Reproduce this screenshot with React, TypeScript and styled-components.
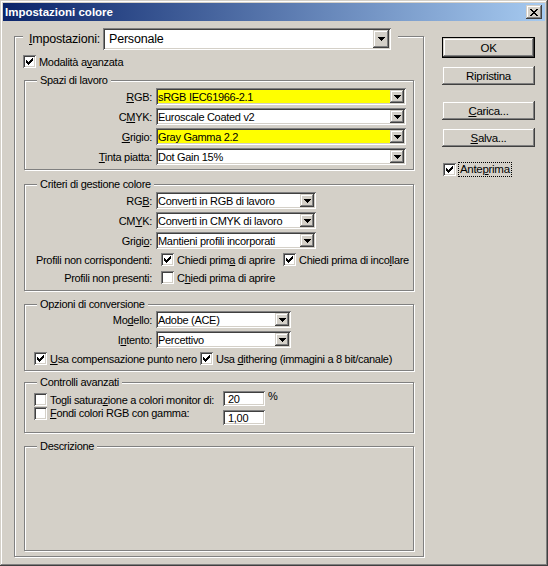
import * as React from 'react';
import styled, { createGlobalStyle } from 'styled-components';

const GlobalStyle = createGlobalStyle`
  html, body {
    margin: 0;
    padding: 0;
    background: #d4d0c8;
  }
  body {
    font-family: "Liberation Sans", Arial, sans-serif;
    font-size: 11px;
    letter-spacing: -0.3px;
    color: #000;
  }
`;

const raised = `
  box-shadow: inset -1px -1px 0 #404040, inset 1px 1px 0 #d4d0c8,
    inset -2px -2px 0 #808080, inset 2px 2px 0 #fff;
`;
const sunken = `
  box-shadow: inset 1px 1px 0 #808080, inset -1px -1px 0 #fff,
    inset 2px 2px 0 #404040, inset -2px -2px 0 #d4d0c8;
`;

const Frame = styled.div`
  width: 548px;
  height: 566px;
  box-sizing: border-box;
  padding: 3px;
  background: #d4d0c8;
  ${raised}
  display: flex;
  flex-direction: column;
`;

const TitleBar = styled.div`
  height: 18px;
  flex: none;
  display: flex;
  align-items: center;
  justify-content: space-between;
  padding: 0 3px 0 2px;
  background: linear-gradient(to right, #0a246a, #a6caf0);
  color: #fff;
  font-weight: bold;
  font-size: 11.5px;
  letter-spacing: 0;
`;

const CloseBtn = styled.span`
  width: 16px;
  height: 14px;
  display: flex;
  align-items: center;
  justify-content: center;
  background: #d4d0c8;
  ${raised}
`;

const Body = styled.div`
  display: flex;
  gap: 18px;
  padding: 15px 0 0 11px;
`;

const OuterGroup = styled.div`
  width: 410px;
  height: 521px;
  box-sizing: border-box;
  border: 1px solid #808080;
  box-shadow: inset 1px 1px 0 #fff, 1px 1px 0 #fff;
  display: flex;
  flex-direction: column;
  padding: 0 9px;
`;

const HeaderCaption = styled.div`
  display: flex;
  align-items: center;
  align-self: flex-start;
  margin: -9px 0 0 -1px;
  padding: 0 7px 0 6px;
  background: #d4d0c8;
  font-size: 12.5px;
  letter-spacing: -0.2px;
`;

const HeaderLabel = styled.span`
  width: 74px;
  white-space: nowrap;
`;

const Group = styled.div<{ $h: number; $mt: number }>`
  width: 390px;
  height: ${p => p.$h}px;
  margin-top: ${p => p.$mt}px;
  box-sizing: border-box;
  flex: none;
  border: 1px solid #808080;
  box-shadow: inset 1px 1px 0 #fff, 1px 1px 0 #fff;
  display: flex;
  flex-direction: column;
`;

const Caption = styled.span`
  align-self: flex-start;
  height: 13px;
  line-height: 13px;
  margin: -7px 0 0 12px;
  padding: 0 3px;
  background: #d4d0c8;
`;

const Rows = styled.div<{ $pt: number; $gap?: number }>`
  display: flex;
  flex-direction: column;
  gap: ${p => (p.$gap === undefined ? 3 : p.$gap)}px;
  padding-top: ${p => p.$pt}px;
`;

const FieldRow = styled.div`
  display: grid;
  grid-template-columns: 127px auto;
  column-gap: 4px;
  align-items: center;
  height: 17px;
`;

const RowLabel = styled.span`
  text-align: right;
  white-space: nowrap;
`;

const Field = styled.div<{ $w: number; $h: number; $bg?: string }>`
  width: ${p => p.$w}px;
  height: ${p => p.$h}px;
  box-sizing: border-box;
  padding: 2px;
  display: flex;
  background: ${p => p.$bg || '#fff'};
  ${sunken}
`;

const FieldText = styled.span<{ $pl: number }>`
  flex: 1;
  display: flex;
  align-items: center;
  padding-left: ${p => p.$pl}px;
  white-space: nowrap;
  overflow: hidden;
`;

const DropBtn = styled.span<{ $w: number }>`
  width: ${p => p.$w}px;
  flex: none;
  display: flex;
  align-items: center;
  justify-content: center;
  background: #d4d0c8;
  ${raised}
`;

const CheckRow = styled.div<{ $cols: string; $pl?: number; $ml?: number; $mt?: number }>`
  display: grid;
  grid-template-columns: ${p => p.$cols};
  align-items: center;
  height: 15px;
  padding-left: ${p => p.$pl || 0}px;
  margin-left: ${p => p.$ml || 0}px;
  margin-top: ${p => p.$mt || 0}px;
`;

const CheckItem = styled.span`
  display: flex;
  align-items: center;
  gap: 3px;
  white-space: nowrap;
`;

const Box = styled.span`
  width: 13px;
  height: 13px;
  box-sizing: border-box;
  padding: 2px;
  flex: none;
  display: flex;
  align-items: center;
  justify-content: center;
  background: #fff;
  ${sunken}
`;

const AdvRow = styled.div<{ $h: number }>`
  display: grid;
  grid-template-columns: 16px 173px 42px auto;
  height: ${p => p.$h}px;
  padding-left: 9px;
  white-space: nowrap;
`;

const Cell = styled.span<{ $mt?: number }>`
  margin-top: ${p => p.$mt || 0}px;
  display: flex;
  align-items: flex-start;
`;

const NumInput = styled.span<{ $mt?: number }>`
  width: 42px;
  height: 15px;
  margin-top: ${p => p.$mt || 0}px;
  box-sizing: border-box;
  padding: 2px 0 0 5px;
  line-height: 12px;
  background: #fff;
  ${sunken}
`;

const Unit = styled.span`
  padding-left: 3px;
  line-height: 11px;
`;

const Side = styled.div`
  width: 93px;
  margin-top: 1px;
  display: flex;
  flex-direction: column;
`;

const Button = styled.div<{ $default?: boolean; $mt: number }>`
  height: ${p => (p.$default ? 21 : 19)}px;
  margin-top: ${p => p.$mt}px;
  box-sizing: border-box;
  display: flex;
  align-items: center;
  justify-content: center;
  background: #d4d0c8;
  border: ${p => (p.$default ? '1px solid #000' : 'none')};
  font-size: 11.5px;
  ${raised}
`;

const Preview = styled.div`
  margin-top: 15px;
  display: flex;
  align-items: center;
  gap: 2px;
  padding-left: 1px;
`;

const Focus = styled.span`
  border: 1px dotted #000;
  padding: 0 1px;
  line-height: 13px;
  font-size: 11.5px;
`;

const Check = () => (
  <svg width="7" height="7" viewBox="0 0 7 7" shapeRendering="crispEdges">
    <path
      d="M0 2h1v3h-1zM1 3h1v3h-1zM2 4h1v3h-1zM3 3h1v3h-1zM4 2h1v3h-1zM5 1h1v3h-1zM6 0h1v3h-1z"
      fill="#000"
    />
  </svg>
);

const Arrow = () => (
  <svg width="7" height="4" viewBox="0 0 7 4" shapeRendering="crispEdges">
    <path d="M0 0h7v1h-7zM1 1h5v1h-5zM2 2h3v1h-3zM3 3h1v1h-1z" fill="#000" />
  </svg>
);

const CloseGlyph = () => (
  <svg width="8" height="7" viewBox="0 0 8 7" shapeRendering="crispEdges">
    <path
      d="M0 0h2v1h-2zM6 0h2v1h-2zM1 1h2v1h-2zM5 1h2v1h-2zM2 2h4v1h-4zM3 3h2v1h-2zM2 4h4v1h-4zM1 5h2v1h-2zM5 5h2v1h-2zM0 6h2v1h-2zM6 6h2v1h-2z"
      fill="#000"
    />
  </svg>
);

const CheckBox = ({ on }: { on?: boolean }) => <Box>{on && <Check />}</Box>;

const Combo = ({ w, value, bg }: { w: number; value: string; bg?: string }) => (
  <Field $w={w} $h={17} $bg={bg}>
    <FieldText $pl={0}>{value}</FieldText>
    <DropBtn $w={14}>
      <Arrow />
    </DropBtn>
  </Field>
);

const Labeled = ({ label, children }: { label: React.ReactNode; children: React.ReactNode }) => (
  <FieldRow>
    <RowLabel>{label}</RowLabel>
    {children}
  </FieldRow>
);

export default function App() {
  return (
    <Frame>
      <GlobalStyle />
      <TitleBar>
        <span>Impostazioni colore</span>
        <CloseBtn>
          <CloseGlyph />
        </CloseBtn>
      </TitleBar>
      <Body>
        <OuterGroup>
          <HeaderCaption>
            <HeaderLabel>
              <u>I</u>mpostazioni:
            </HeaderLabel>
            <Field $w={288} $h={22}>
              <FieldText $pl={4}>Personale</FieldText>
              <DropBtn $w={16}>
                <Arrow />
              </DropBtn>
            </Field>
          </HeaderCaption>

          <CheckRow $cols="auto" $ml={-1} $mt={4}>
            <CheckItem>
              <CheckBox on />
              <span>
                Modalità a<u>v</u>anzata
              </span>
            </CheckItem>
          </CheckRow>

          <Group $h={90} $mt={11}>
            <Caption>Spazi di lavoro</Caption>
            <Rows $pt={1}>
              <Labeled label={<><u>R</u>GB:</>}>
                <Combo w={250} value="sRGB IEC61966-2.1" bg="#ffff00" />
              </Labeled>
              <Labeled label={<>C<u>M</u>YK:</>}>
                <Combo w={250} value="Euroscale Coated v2" />
              </Labeled>
              <Labeled label={<><u>G</u>rigio:</>}>
                <Combo w={250} value="Gray Gamma 2.2" bg="#ffff00" />
              </Labeled>
              <Labeled label={<><u>T</u>inta piatta:</>}>
                <Combo w={250} value="Dot Gain 15%" />
              </Labeled>
            </Rows>
          </Group>

          <Group $h={107} $mt={14}>
            <Caption>Criteri di gestione colore</Caption>
            <Rows $pt={1}>
              <Labeled label={<>RG<u>B</u>:</>}>
                <Combo w={160} value="Converti in RGB di lavoro" />
              </Labeled>
              <Labeled label={<>CM<u>Y</u>K:</>}>
                <Combo w={160} value="Converti in CMYK di lavoro" />
              </Labeled>
              <Labeled label={<>Grigi<u>o</u>:</>}>
                <Combo w={160} value="Mantieni profili incorporati" />
              </Labeled>
              <CheckRow $cols="127px 9px 122px auto">
                <RowLabel>Profili non corrispondenti:</RowLabel>
                <span />
                <CheckItem>
                  <CheckBox on />
                  <span>
                    Chiedi prim<u>a</u> di aprire
                  </span>
                </CheckItem>
                <CheckItem>
                  <CheckBox on />
                  <span>
                    Chiedi prima di inco<u>l</u>lare
                  </span>
                </CheckItem>
              </CheckRow>
              <CheckRow $cols="127px 9px auto">
                <RowLabel>Profili non presenti:</RowLabel>
                <span />
                <CheckItem>
                  <CheckBox />
                  <span>
                    C<u>h</u>iedi prima di aprire
                  </span>
                </CheckItem>
              </CheckRow>
            </Rows>
          </Group>

          <Group $h={67} $mt={13}>
            <Caption>Opzioni di conversione</Caption>
            <Rows $pt={0}>
              <Labeled label={<>Mo<u>d</u>ello:</>}>
                <Combo w={135} value="Adobe (ACE)" />
              </Labeled>
              <Labeled label={<>I<u>n</u>tento:</>}>
                <Combo w={135} value="Percettivo" />
              </Labeled>
              <CheckRow $cols="166px auto" $pl={9}>
                <CheckItem>
                  <CheckBox on />
                  <span>
                    <u>U</u>sa compensazione punto nero
                  </span>
                </CheckItem>
                <CheckItem>
                  <CheckBox on />
                  <span>
                    Usa <u>d</u>ithering (immagini a 8 bit/canale)
                  </span>
                </CheckItem>
              </CheckRow>
            </Rows>
          </Group>

          <Group $h={51} $mt={11}>
            <Caption>Controlli avanzati</Caption>
            <Rows $pt={2} $gap={0}>
              <AdvRow $h={16}>
                <Cell $mt={2}>
                  <CheckBox />
                </Cell>
                <Cell $mt={3}>
                  <span>
                    Togli satura<u>z</u>ione a colori monitor di:
                  </span>
                </Cell>
                <NumInput>20</NumInput>
                <Unit>%</Unit>
              </AdvRow>
              <AdvRow $h={18}>
                <Cell>
                  <CheckBox />
                </Cell>
                <Cell>
                  <span>
                    <u>F</u>ondi colori RGB con gamma:
                  </span>
                </Cell>
                <NumInput $mt={3}>1,00</NumInput>
                <span />
              </AdvRow>
            </Rows>
          </Group>

          <Group $h={105} $mt={13}>
            <Caption>Descrizione</Caption>
          </Group>
        </OuterGroup>

        <Side>
          <Button $default $mt={0}>OK</Button>
          <Button $mt={8}>Ripristina</Button>
          <Button $mt={16}>
            <span>
              <u>C</u>arica...
            </span>
          </Button>
          <Button $mt={8}>
            <span>
              <u>S</u>alva...
            </span>
          </Button>
          <Preview>
            <CheckBox on />
            <Focus>
              Ante<u>p</u>rima
            </Focus>
          </Preview>
        </Side>
      </Body>
    </Frame>
  );
}
